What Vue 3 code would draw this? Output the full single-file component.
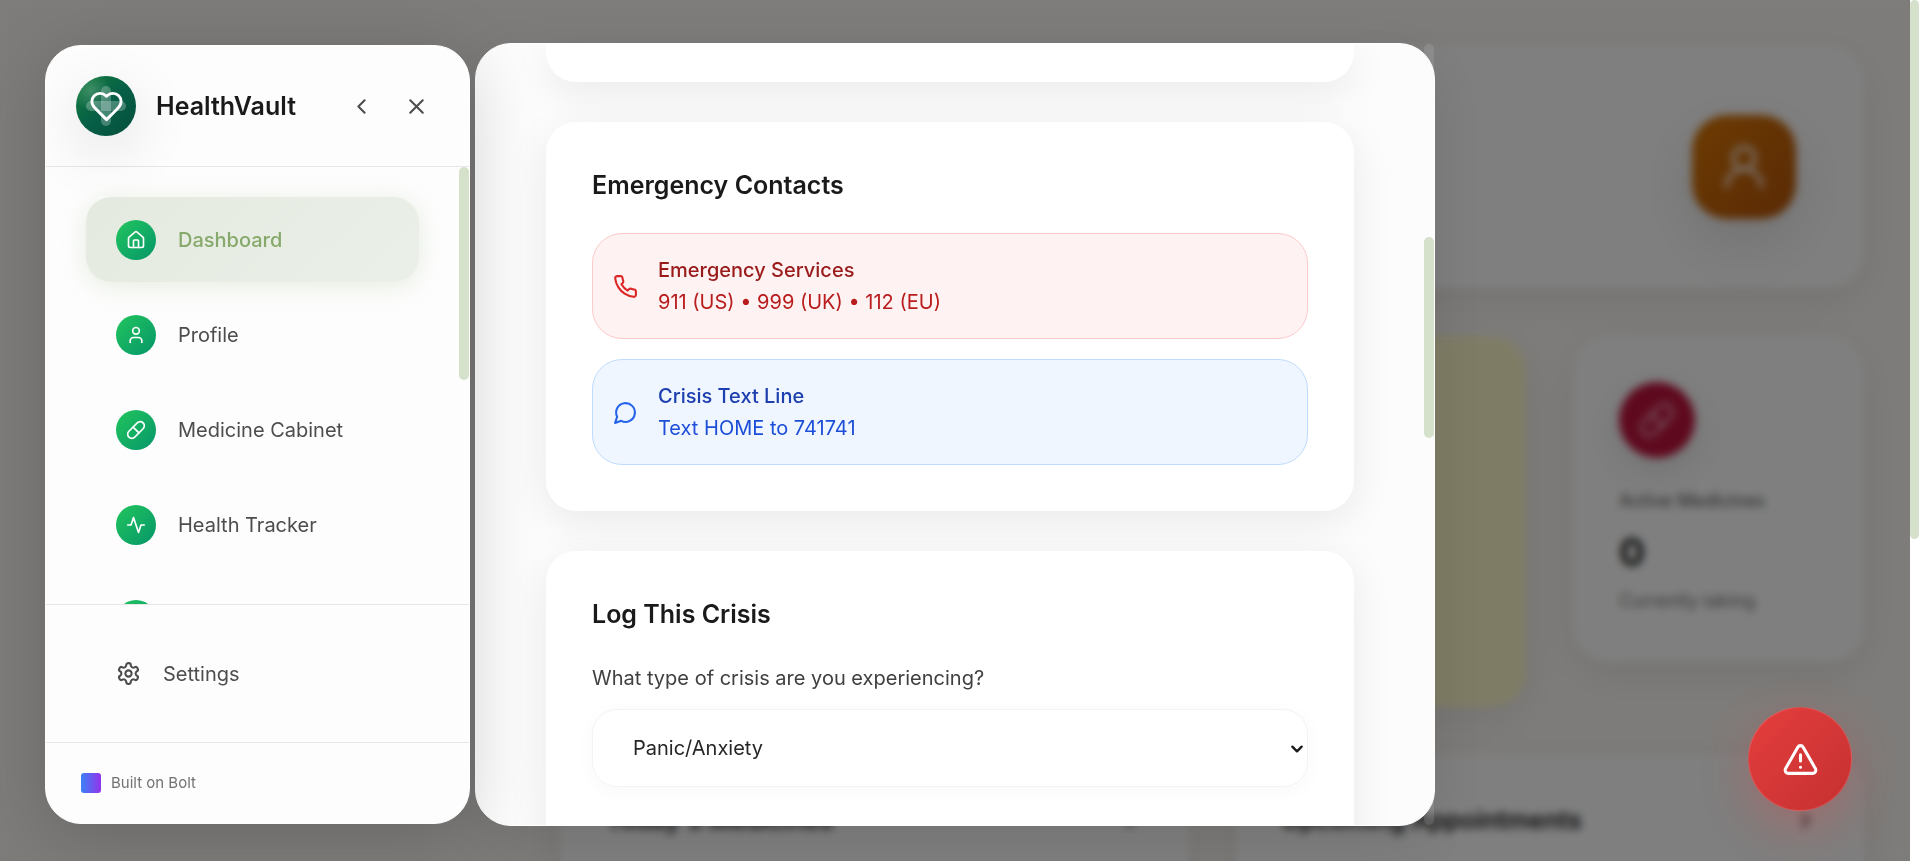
<template>
  <div class="app">
    <aside class="sidebar">
      <header class="brand">
        <div class="logo">
          <svg class="logo-heart" viewBox="0 0 24 24">
            <path d="M19 14c1.49-1.46 3-3.21 3-5.5A5.5 5.5 0 0 0 16.5 3c-1.76 0-3 .5-4.5 2-1.5-1.5-2.74-2-4.5-2A5.5 5.5 0 0 0 2 8.5c0 2.3 1.5 4.05 3 5.5l7 7Z" />
          </svg>
        </div>
        <span class="brand-name">HealthVault</span>
        <div class="brand-actions">
          <button type="button" class="icon-btn" aria-label="Collapse sidebar">
            <svg class="icon" viewBox="0 0 24 24"><path d="m15 18-6-6 6-6" /></svg>
          </button>
          <button type="button" class="icon-btn" aria-label="Close sidebar">
            <svg class="icon" viewBox="0 0 24 24"><path d="M18 6 6 18M6 6l12 12" /></svg>
          </button>
        </div>
      </header>

      <nav class="nav">
        <a
          v-for="item in navItems"
          :key="item.id"
          href="#"
          class="nav-item"
          :class="{ active: item.id === current }"
          :aria-label="item.id"
          @click.prevent="current = item.id"
        >
          <span class="nav-icon">
            <svg viewBox="0 0 24 24"><path v-for="d in item.paths" :key="d" :d="d" /></svg>
          </span>
          {{ item.label }}
        </a>
        <div class="scroll-thumb nav-thumb"></div>
      </nav>

      <div class="settings">
        <a href="#" class="settings-link">
          <svg class="icon" viewBox="0 0 24 24">
            <path d="M12.22 2h-.44a2 2 0 0 0-2 2v.18a2 2 0 0 1-1 1.73l-.43.25a2 2 0 0 1-2 0l-.15-.08a2 2 0 0 0-2.73.73l-.22.38a2 2 0 0 0 .73 2.73l.15.1a2 2 0 0 1 1 1.72v.51a2 2 0 0 1-1 1.74l-.15.09a2 2 0 0 0-.73 2.73l.22.38a2 2 0 0 0 2.73.73l.15-.08a2 2 0 0 1 2 0l.43.25a2 2 0 0 1 1 1.73V20a2 2 0 0 0 2 2h.44a2 2 0 0 0 2-2v-.18a2 2 0 0 1 1-1.73l.43-.25a2 2 0 0 1 2 0l.15.08a2 2 0 0 0 2.73-.73l.22-.39a2 2 0 0 0-.73-2.73l-.15-.08a2 2 0 0 1-1-1.74v-.5a2 2 0 0 1 1-1.74l.15-.09a2 2 0 0 0 .73-2.73l-.22-.38a2 2 0 0 0-2.73-.73l-.15.08a2 2 0 0 1-2 0l-.43-.25a2 2 0 0 1-1-1.73V4a2 2 0 0 0-2-2z" />
            <circle cx="12" cy="12" r="3" />
          </svg>
          Settings
        </a>
      </div>

      <footer class="built">
        <span class="built-mark"></span>
        Built on Bolt
      </footer>
    </aside>

    <main class="main">
      <section class="panel hero">
        <div class="avatar">
          <svg viewBox="0 0 24 24"><circle cx="12" cy="8" r="5" /><path d="M20 21a8 8 0 0 0-16 0" /></svg>
        </div>
      </section>

      <section class="stats">
        <div class="panel highlight"></div>
        <div class="panel stat">
          <div class="stat-icon">
            <svg viewBox="0 0 24 24"><path v-for="d in pill" :key="d" :d="d" /></svg>
          </div>
          <div class="stat-label">Active Medicines</div>
          <div class="stat-value">0</div>
          <div class="stat-note">Currently taking</div>
        </div>
      </section>

      <section class="lists">
        <div v-for="title in lists" :key="title" class="panel list">
          <h2>{{ title }}</h2>
          <svg class="icon" viewBox="0 0 24 24"><path d="m9 18 6-6-6-6" /></svg>
        </div>
      </section>
    </main>

    <!-- Crisis modal -->
    <div class="overlay">
      <div class="modal" role="dialog" aria-label="Crisis support">
        <div class="modal-body">
          <section class="card card-end"></section>

          <section class="card">
            <h3>Emergency Contacts</h3>
            <div class="contacts">
              <div
                v-for="contact in contacts"
                :key="contact.name"
                class="contact"
                :class="contact.kind"
              >
                <svg class="icon" viewBox="0 0 24 24"><path :d="contact.path" /></svg>
                <div>
                  <div class="contact-name">{{ contact.name }}</div>
                  <div class="contact-detail">{{ contact.detail }}</div>
                </div>
              </div>
            </div>
          </section>

          <section class="card card-form">
            <h3>Log This Crisis</h3>
            <label for="crisisType">What type of crisis are you experiencing?</label>
            <div class="select-wrap">
              <select id="crisisType" v-model="crisisType">
                <option value="panic">Panic/Anxiety</option>
              </select>
              <svg class="select-arrow" viewBox="0 0 12 12"><path d="m2 4 4 4 4-4" /></svg>
            </div>
          </section>
        </div>
        <div class="modal-track">
          <div class="scroll-thumb modal-thumb"></div>
        </div>
      </div>
    </div>

    <button type="button" class="crisis-btn" aria-label="Crisis support">
      <svg viewBox="0 0 24 24">
        <path d="m21.73 18-8-14a2 2 0 0 0-3.48 0l-8 14A2 2 0 0 0 4 21h16a2 2 0 0 0 1.73-3" />
        <path d="M12 9v4M12 17h.01" />
      </svg>
    </button>

    <div class="page-track">
      <div class="scroll-thumb page-thumb"></div>
    </div>
  </div>
</template>

<script setup>
import { ref } from 'vue'

const current = ref('dashboard')
const crisisType = ref('panic')

const pill = [
  'm10.5 20.5 10-10a4.95 4.95 0 1 0-7-7l-10 10a4.95 4.95 0 1 0 7 7Z',
  'm8.5 8.5 7 7'
]

const navItems = [
  {
    id: 'dashboard',
    label: 'Dashboard',
    paths: [
      'M15 21v-8a1 1 0 0 0-1-1h-4a1 1 0 0 0-1 1v8',
      'M3 10a2 2 0 0 1 .709-1.528l7-5.999a2 2 0 0 1 2.582 0l7 5.999A2 2 0 0 1 21 10v9a2 2 0 0 1-2 2H5a2 2 0 0 1-2-2z'
    ]
  },
  {
    id: 'profile',
    label: 'Profile',
    paths: [
      'M19 21v-2a4 4 0 0 0-4-4H9a4 4 0 0 0-4 4v2',
      'M12 3a4 4 0 1 0 0 8a4 4 0 1 0 0-8'
    ]
  },
  { id: 'medicine', label: 'Medicine Cabinet', paths: pill },
  {
    id: 'tracker',
    label: 'Health Tracker',
    paths: ['M22 12h-4l-3 9L9 3l-3 9H2']
  },
  {
    id: 'calendar',
    paths: ['M8 2v4M16 2v4M3 10h18', 'M5 4h14a2 2 0 0 1 2 2v14a2 2 0 0 1-2 2H5a2 2 0 0 1-2-2V6a2 2 0 0 1 2-2']
  }
]

const contacts = [
  {
    name: 'Emergency Services',
    detail: '911 (US) • 999 (UK) • 112 (EU)',
    kind: 'danger',
    path: 'M22 16.92v3a2 2 0 0 1-2.18 2 19.79 19.79 0 0 1-8.63-3.07 19.5 19.5 0 0 1-6-6 19.79 19.79 0 0 1-3.07-8.67A2 2 0 0 1 4.11 2h3a2 2 0 0 1 2 1.72 12.84 12.84 0 0 0 .7 2.81 2 2 0 0 1-.45 2.11L8.09 9.91a16 16 0 0 0 6 6l1.27-1.27a2 2 0 0 1 2.11-.45 12.84 12.84 0 0 0 2.81.7A2 2 0 0 1 22 16.92z'
  },
  {
    name: 'Crisis Text Line',
    detail: 'Text HOME to 741741',
    kind: 'info',
    path: 'M7.9 20A9 9 0 1 0 4 16.1L2 22Z'
  }
]

const lists = ["Today's Medicines", 'Upcoming Appointments']
</script>

<style>
body {
  margin: 0;
  background: #fcf9f5;
}
</style>

<style scoped>
* {
  box-sizing: border-box;
}

.app {
  display: flex;
  height: 100vh;
  overflow: hidden;
  font-family: Inter, 'Liberation Sans', sans-serif;
  font-size: 20px;
  line-height: 32px;
  color: #1a1a1a;
}

svg {
  fill: none;
  stroke: currentColor;
  stroke-width: 2;
  stroke-linecap: round;
  stroke-linejoin: round;
}

.icon {
  width: 25px;
  height: 25px;
  flex: none;
}

a {
  color: inherit;
  text-decoration: none;
}

h2,
h3 {
  margin: 0;
  font-size: 25px;
  line-height: 35px;
  font-weight: 600;
}

/* Sidebar */
.sidebar {
  position: relative;
  z-index: 20;
  flex: 0 0 425px;
  display: flex;
  flex-direction: column;
  margin: 45px 0 37px 45px;
  border: 1px solid #fff;
  border-radius: 36px;
  background: #fdfdfd;
  box-shadow: 0 12px 70px rgba(0, 0, 0, 0.17);
  overflow: hidden;
  color: #4d4d4d;
}

.brand {
  display: flex;
  align-items: center;
  gap: 20px;
  padding: 30px;
  border-bottom: 1px solid #e5e7eb;
}

.logo {
  display: flex;
  align-items: center;
  justify-content: center;
  position: relative;
  width: 60px;
  height: 60px;
  border-radius: 50%;
  background:
    radial-gradient(circle at 25% 25%, rgba(255, 255, 255, 0.2), transparent 30%),
    linear-gradient(135deg, #15803d, #065f46 50%, #064e3b);
  box-shadow: 0 16px 60px rgba(0, 0, 0, 0.12);
}

.logo::before,
.logo::after {
  content: '';
  position: absolute;
  inset: 25px 10px;
  border-radius: 5px;
  background: rgba(255, 255, 255, 0.25);
}

.logo::after {
  inset: 10px 25px;
}

.logo-heart {
  position: relative;
  width: 35px;
  height: 35px;
  color: #fff;
}

.brand-name {
  flex: 1;
  font-size: 25px;
  font-weight: 600;
  color: #1a1a1a;
}

.brand-actions {
  display: flex;
  gap: 10px;
}

.icon-btn {
  display: flex;
  padding: 10px;
  border: none;
  background: none;
  color: #4d4d4d;
  cursor: pointer;
}

.nav {
  position: relative;
  flex: 1;
  min-height: 0;
  display: flex;
  flex-direction: column;
  gap: 10px;
  padding: 30px 50px 0 40px;
  overflow: hidden;
}

.nav-item {
  flex: none;
  display: flex;
  align-items: center;
  gap: 22px;
  height: 85px;
  padding: 0 30px;
  border-radius: 25px;
}

.nav-item.active {
  background: linear-gradient(135deg, #e4eae0, #eaf0e7);
  box-shadow: 0 4px 24px rgba(135, 169, 107, 0.2);
  color: #87a96b;
  font-weight: 500;
}

.nav-icon {
  display: flex;
  align-items: center;
  justify-content: center;
  width: 40px;
  height: 40px;
  border-radius: 50%;
  background: linear-gradient(135deg, #22c55e, #059669);
  color: #fff;
}

.nav-icon svg {
  width: 20px;
  height: 20px;
}

.settings {
  padding: 30px 40px;
  border-top: 1px solid #e5e7eb;
  border-bottom: 1px solid #e5e7eb;
}

.settings-link {
  display: flex;
  align-items: center;
  gap: 22px;
  height: 77px;
  padding: 0 30px;
}

.built {
  display: flex;
  align-items: center;
  gap: 10px;
  height: 80px;
  padding: 0 35px;
  font-size: 15px;
  color: #737373;
}

.built-mark {
  width: 20px;
  height: 20px;
  border-radius: 3px;
  background: linear-gradient(90deg, #3b82f6, #9333ea);
}

/* Scroll bars */
.scroll-thumb {
  border-radius: 5px;
  background: #d5e1cb;
}

.nav-thumb {
  position: absolute;
  top: 0;
  right: 0;
  width: 10px;
  height: 213px;
}

.page-track {
  position: fixed;
  inset: 0 0 0 auto;
  z-index: 40;
  width: 9px;
  background: #fff;
}

.page-thumb {
  height: 539px;
}

/* Dashboard */
.main {
  flex: 1;
  min-width: 0;
  padding: 45px 55px 45px 90px;
}

.panel {
  border-radius: 35px;
  background: #fff;
  box-shadow: 0 12px 40px rgba(0, 0, 0, 0.08);
}

.hero {
  display: flex;
  align-items: center;
  justify-content: flex-end;
  height: 243px;
  padding: 0 68px;
}

.avatar {
  display: flex;
  align-items: center;
  justify-content: center;
  width: 104px;
  height: 104px;
  border-radius: 35px;
  background: linear-gradient(135deg, #d97706, #b45309);
  box-shadow: 0 20px 60px rgba(0, 0, 0, 0.12);
  color: rgba(255, 255, 255, 0.8);
}

.avatar svg {
  width: 52px;
  height: 52px;
}

.stats {
  display: grid;
  grid-template-columns: repeat(4, 1fr);
  align-items: start;
  gap: 47px;
  margin: 48px 0;
}

.highlight {
  grid-column: 1 / 4;
  height: 371px;
  background: #fef9cc;
}

.stat {
  padding: 46px;
}

.stat-icon {
  display: flex;
  align-items: center;
  justify-content: center;
  width: 76px;
  height: 76px;
  border-radius: 50%;
  background: #be123c;
  box-shadow: 0 12px 40px rgba(0, 0, 0, 0.12);
  color: rgba(255, 255, 255, 0.6);
}

.stat-icon svg {
  width: 38px;
  height: 38px;
}

.stat-label {
  margin: 27px 0 10px;
  font-size: 18px;
  color: #525252;
}

.stat-value {
  font-size: 38px;
  line-height: 50px;
  font-weight: 700;
}

.stat-note {
  margin-top: 9px;
  font-size: 18px;
  line-height: 30px;
  color: #737373;
}

.lists {
  display: grid;
  grid-template-columns: repeat(2, 1fr);
  gap: 47px;
}

.list {
  display: flex;
  align-items: center;
  justify-content: space-between;
  height: 300px;
  padding: 46px 46px 216px;
}

/* Crisis modal */
.overlay {
  position: fixed;
  inset: 0 9px 0 0;
  z-index: 10;
  display: flex;
  justify-content: center;
  padding: 43px 0 35px;
  background: rgba(0, 0, 0, 0.5);
  backdrop-filter: blur(4px);
}

.modal {
  position: relative;
  width: 960px;
  border-radius: 36px;
  box-shadow: 0 16px 60px rgba(0, 0, 0, 0.1);
}

.modal-body {
  display: flex;
  flex-direction: column;
  gap: 40px;
  height: 100%;
  padding: 0 80px 0 70px;
  border: 1px solid #fff;
  border-radius: 36px;
  background: #fcfcfc;
  overflow: hidden;
}

.modal-track {
  position: absolute;
  inset: 1px 1px 1px auto;
  width: 10px;
  padding-top: 193px;
  border-radius: 5px;
  background: rgba(255, 255, 255, 0.1);
}

.modal-thumb {
  height: 201px;
}

.card {
  flex: none;
  padding: 46px;
  border-radius: 30px;
  background: #fff;
  box-shadow: 0 10px 40px rgba(0, 0, 0, 0.08);
}

.card-end {
  height: 38px;
  padding: 0;
  border-radius: 0 0 30px 30px;
}

.card-form {
  padding-bottom: 100px;
}

.card h3 {
  margin-bottom: 30px;
}

.contacts {
  display: flex;
  flex-direction: column;
  gap: 20px;
}

.contact {
  display: flex;
  align-items: center;
  gap: 20px;
  padding: 20px;
  border: 1px solid;
  border-radius: 30px;
}

.contact-name {
  font-weight: 500;
}

.danger {
  border-color: #fecaca;
  background: #fef2f2;
  color: #b91c1c;
}

.danger .icon {
  color: #dc2626;
}

.danger .contact-name {
  color: #991b1b;
}

.info {
  border-color: #bfdbfe;
  background: #eff6ff;
  color: #1d4ed8;
}

.info .icon {
  color: #2563eb;
}

.info .contact-name {
  color: #1e40af;
}

label {
  display: block;
  margin-bottom: 15px;
  color: #404040;
}

.select-wrap {
  position: relative;
}

select {
  appearance: none;
  display: block;
  width: 100%;
  height: 78px;
  padding: 0 40px;
  border: 1px solid #f3f3f3;
  border-radius: 25px;
  background: #fff;
  box-shadow: 0 4px 20px rgba(0, 0, 0, 0.03);
  font-family: inherit;
  font-size: 20px;
  color: #262626;
}

.select-arrow {
  position: absolute;
  top: 33px;
  right: 4px;
  width: 14px;
  height: 14px;
  pointer-events: none;
}

.crisis-btn {
  position: fixed;
  right: 67px;
  bottom: 50px;
  z-index: 30;
  display: flex;
  align-items: center;
  justify-content: center;
  width: 104px;
  height: 104px;
  padding: 0;
  border: 1px solid rgba(255, 255, 255, 0.15);
  border-radius: 50%;
  background: linear-gradient(135deg, #e53e3e, #c53030);
  box-shadow: 0 16px 48px rgba(229, 62, 62, 0.3);
  color: #fff;
  cursor: pointer;
}

.crisis-btn svg {
  width: 37px;
  height: 37px;
}
</style>
